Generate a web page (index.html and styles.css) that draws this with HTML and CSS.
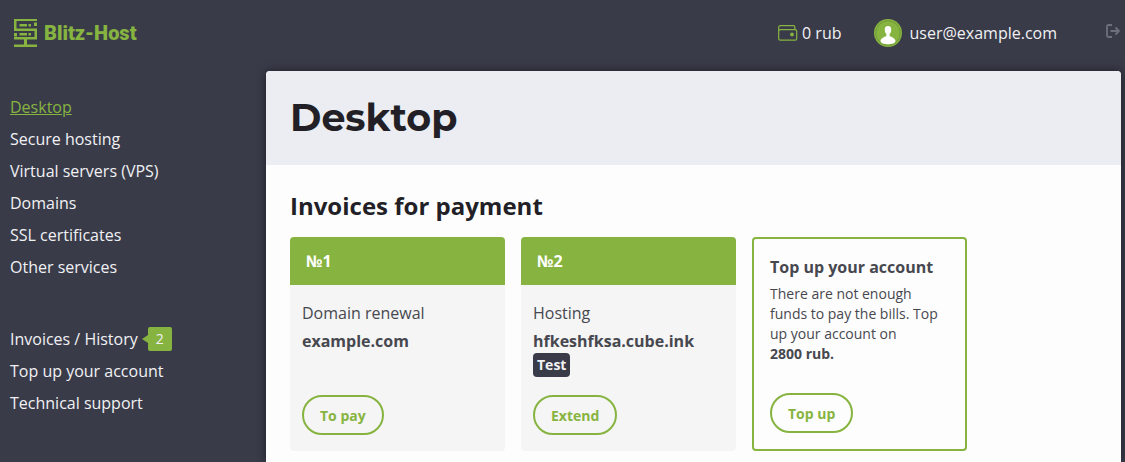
FILE: index.html
```html
<!DOCTYPE html>
<html lang="en">
<head>
    <meta charset="UTF-8">
    <meta name="viewport" content="width=device-width, initial-scale=1.0">
    <title>Desktop - Blitz-Host</title>
    <link rel="stylesheet" href="styles.css">
</head>
<body>

<header class="header">
    <a class="logo" href="#">
        <svg width="23" height="28" viewBox="0 0 23 28" fill="#87b440" aria-hidden="true">
            <path d="M0 0h23v2H2.500v7.500H23V20.500H0V18h20.500v-6H0z"/>
            <path d="M20 3.500h3V7h-3zM0 14h3v3.500H0z"/>
            <path d="M5.500 5H13v2.500H5.500zM14.500 5H17v2.500h-2.500zM5.500 14H13v2.500H5.500zM14.500 14H17v2.500h-2.500z"/>
            <path d="M10 20h3v6h-3zM0 25.500h23V28H0z"/>
        </svg>
        <span>Blitz-Host</span>
    </a>
    <a class="balance" href="#">
        <svg width="20" height="16" viewBox="0 0 20 16" fill="none" stroke="#87b440" stroke-width="1.200" aria-hidden="true">
            <path d="M.7 6V2.200A1.500 1.500 0 0 1 2.200.7h13.300a1.300 1.300 0 0 1 1.300 1.300v2.500"/>
            <rect x=".7" y="4.700" width="18" height="10.500" rx="1.500"/>
            <circle cx="14" cy="9.500" r="1.300" fill="#87b440"/>
        </svg>
        <span>0 rub</span>
    </a>
    <a class="user" href="#">
        <svg width="28" height="28" viewBox="0 0 28 28" aria-hidden="true">
            <circle cx="14" cy="14" r="14" fill="#87b440"/>
            <circle cx="14" cy="14" r="12.300" fill="none" stroke="#6a9235" stroke-width=".8"/>
            <path d="M14 7c2.300 0 3.400 1.600 3.200 4-.1 2.200-1 3.500-1.600 4.100v1.600c0 1 5.400 1.300 5.900 5.300.1 2-3.500 3.300-7.500 3.300S6.400 24 6.500 22c.5-4 5.900-4.300 5.900-5.300v-1.600c-.6-.6-1.500-1.900-1.600-4.100C10.600 8.600 11.700 7 14 7z" fill="#fff"/>
        </svg>
        <span>user@example.com</span>
    </a>
    <a class="logout" href="#" aria-label="Log out">
        <svg width="14" height="14" viewBox="0 0 14 14" fill="none" stroke="#6d707c" stroke-width="1.800" aria-hidden="true">
            <path d="M6 1H2.500Q1 1 1 2.500v9Q1 13 2.500 13H6M4.500 7H13M9.500 3.500 13 7l-3.500 3.500"/>
        </svg>
    </a>
</header>

<div class="layout">
    <nav class="sidebar">
        <ul class="menu">
            <li><a class="active" href="#">Desktop</a></li>
            <li><a href="#">Secure hosting</a></li>
            <li><a href="#">Virtual servers (VPS)</a></li>
            <li><a href="#">Domains</a></li>
            <li><a href="#">SSL certificates</a></li>
            <li><a href="#">Other services</a></li>
        </ul>
        <ul class="menu">
            <li><a href="#">Invoices / History</a><span class="count">2</span></li>
            <li><a href="#">Top up your account</a></li>
            <li><a href="#">Technical support</a></li>
        </ul>
    </nav>

    <main class="content">
        <div class="page-title">
            <h1>Desktop</h1>
        </div>
        <section class="invoices">
            <h2>Invoices for payment</h2>
            <div class="cards">
                <article class="card">
                    <h3 class="card-number">№1</h3>
                    <div class="card-body">
                        <p>Domain renewal</p>
                        <p class="card-name">example.com</p>
                        <button class="btn" type="button">To pay</button>
                    </div>
                </article>
                <article class="card">
                    <h3 class="card-number">№2</h3>
                    <div class="card-body">
                        <p>Hosting</p>
                        <p class="card-name">hfkeshfksa.cube.ink</p>
                        <span class="tag">Test</span>
                        <button class="btn" type="button">Extend</button>
                    </div>
                </article>
                <article class="card card-topup">
                    <h3>Top up your account</h3>
                    <p>There are not enough funds to pay the bills. Top up your account on <b>2800&nbsp;rub.</b></p>
                    <button class="btn" type="button">Top up</button>
                </article>
            </div>
        </section>
    </main>
</div>

</body>
</html>
```

FILE: styles.css
```css
* {
    box-sizing: border-box;
}
body {
    margin: 0;
    min-height: 100vh;
    display: flex;
    flex-direction: column;
    background-color: #393b49;
    color: #47484f;
    font-family: "Open Sans", sans-serif;
    font-size: 16px;
    line-height: 24px;
}
h1, h2, h3, p, ul {
    margin: 0;
    padding: 0;
}
a {
    color: #f1f1f4;
    text-decoration: none;
}
svg {
    display: block;
}

/* Header */
.header {
    display: flex;
    align-items: center;
    height: 66px;
    padding: 0 5px 0 14px;
}
.logo {
    display: flex;
    align-items: center;
    gap: 7px;
    margin-right: auto;
    color: #87b440;
    font-family: Roboto, sans-serif;
    font-size: 20px;
    font-weight: 900;
}
.balance {
    display: flex;
    align-items: center;
    gap: 4px;
    margin-right: 32px;
}
.user {
    display: flex;
    align-items: center;
    gap: 8px;
    margin-right: 49px;
}
.logout {
    padding-bottom: 4px;
}

/* Page columns */
.layout {
    flex: 1;
    display: grid;
    grid-template-columns: 256px 1fr;
    gap: 10px;
    padding: 5px 4px 0 0;
}
.sidebar {
    padding: 20px 0 0 10px;
}
.menu {
    list-style: none;
    margin-bottom: 40px;
}
.menu li {
    display: flex;
    align-items: center;
    height: 32px;
}
.menu .active {
    color: #87b440;
    text-decoration: underline;
}
.count {
    position: relative;
    width: 24px;
    margin-left: 10px;
    border-radius: 2px;
    background-color: #87b440;
    color: #f1f1f4;
    font-size: 14px;
    text-align: center;
}
.count::before {
    content: "";
    position: absolute;
    top: 8px;
    right: 100%;
    border: 4px solid transparent;
    border-left: 0;
    border-right: 6px solid #87b440;
}

/* Main panel */
.content {
    border-radius: 4px 4px 0 0;
    background-color: #fdfdfd;
    box-shadow: 0 0 10px rgba(0, 0, 0, 0.5);
    overflow: hidden;
}
.page-title {
    padding: 24px;
    background-color: #ecedf2;
}
.page-title h1 {
    color: #231f27;
    font-family: Montserrat, Inter, sans-serif;
    font-size: 38px;
    font-weight: 700;
    line-height: 46px;
}
.invoices {
    padding: 25px 24px 11px;
}
.invoices h2 {
    margin-bottom: 15px;
    color: #231f27;
    font-size: 24px;
    line-height: 32px;
}

/* Invoice cards */
.cards {
    display: flex;
    flex-wrap: wrap;
    gap: 16px;
}
.card {
    display: flex;
    flex-direction: column;
    width: 215px;
    min-height: 214px;
    border-radius: 4px;
    background-color: #f5f5f5;
    overflow: hidden;
}
.card h3 {
    font-size: 16px;
}
.card-number {
    padding: 12px 16px;
    background-color: #87b440;
    color: #fff;
}
.card-body {
    flex: 1;
    display: flex;
    flex-direction: column;
    align-items: flex-start;
    padding: 16px 12px;
}
.card-name {
    margin-top: 4px;
    font-weight: 700;
}
.tag {
    padding: 0 4px;
    border-radius: 4px;
    background-color: #393b49;
    color: #f1f1f4;
    font-size: 14px;
    font-weight: 700;
}
.card-topup {
    align-items: flex-start;
    padding: 16px;
    border: 2px solid #87b440;
    background-color: #fdfdfd;
}
.card-topup p {
    margin-top: 5px;
    font-size: 14px;
    line-height: 20px;
}
.btn {
    height: 40px;
    margin-top: auto;
    padding: 0 16px;
    border: 2px solid #87b440;
    border-radius: 20px;
    background-color: transparent;
    color: #87b440;
    font-family: inherit;
    font-size: 14px;
    font-weight: 700;
    cursor: pointer;
}
.btn:hover {
    background-color: #87b440;
    color: #fff;
}
```
